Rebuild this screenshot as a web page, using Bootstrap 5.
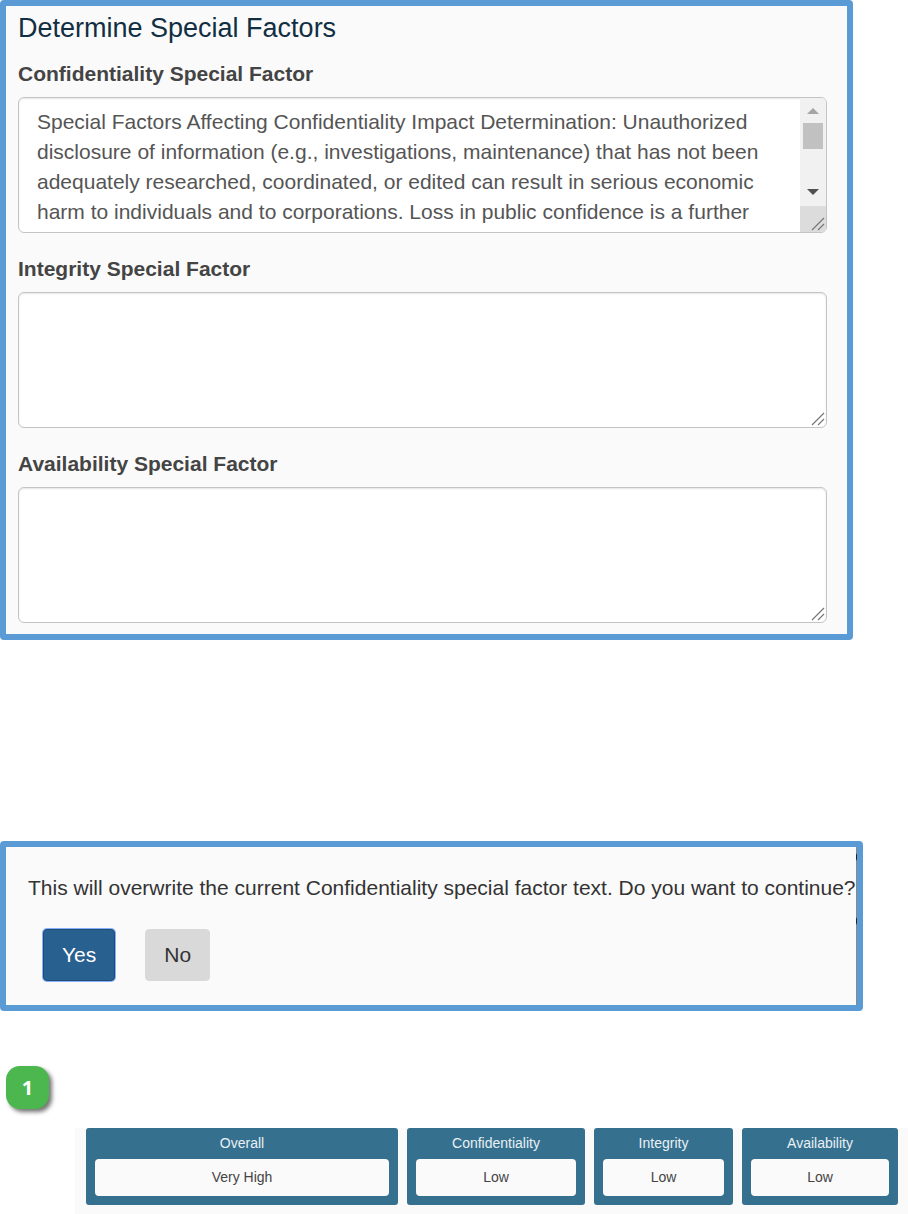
<!DOCTYPE html>
<html lang="en">
<head>
<meta charset="utf-8">
<meta name="viewport" content="width=device-width, initial-scale=1">
<title>Determine Special Factors</title>
<link href="https://cdn.jsdelivr.net/npm/bootstrap@5.3.0/dist/css/bootstrap.min.css" rel="stylesheet">
<style>
  body { font-family: "Liberation Sans", Arial, sans-serif; font-size: 21px; line-height: 30px; color: #333; background: #fff; }
  .panel { background: #fafafa; border: 6px solid #5b9bd5; border-radius: 4px; }
  .factors { margin-right: 55px; padding: 6px 20px 11px 12px; }
  .factors h1 { font-size: 27px; line-height: 32px; color: #112e42; margin-bottom: 15px; }
  .factors label { font-weight: 700; line-height: 30px; color: #444; margin-bottom: 8px; }
  .factor-box { position: relative; }
  .factor-box + label { margin-top: 21px; }
  .factor-box textarea { height: 136px; padding: 9px 36px 0 18px; font-size: 21px; line-height: 30px; color: #555; background: #fff; border: 1px solid #c4c4c4; border-radius: 6px; box-shadow: inset 0 1px 2px #0000001a; resize: none; overflow: hidden; }
  .scroller { position: absolute; top: 1px; right: 1px; bottom: 1px; width: 26px; height: 134px; border-radius: 0 5px 5px 0; pointer-events: none; }
  .grip { position: absolute; right: 2px; bottom: 2px; pointer-events: none; }
  .confirm { margin: 201px 45px 0 0; padding: 26px 0 24px 22px; background: linear-gradient(#888 6px, #222 8px, #222 12px, #888 14px, #888 70px, #222 72px, #222 76px, #888 78px) right / 1px 100% no-repeat #fafafa; }
  .confirm p { white-space: nowrap; margin-bottom: 26px; }
  .confirm .btn { height: 52px; padding: 0 18px; font-size: 21px; border: 1px solid #d9d9d9; border-radius: 4px; background: #d9d9d9; color: #333; }
  .confirm .btn-yes { background: #286090; border: 1px solid #204d74; color: #fff; box-shadow: 0 0 0 1px #86b0ff; }
  .answers { gap: 30px; margin-left: 15px; }
  .step { width: 43px; height: 43px; margin: 55px 0 0 6px; border-radius: 14px; background: #4bb74e; color: #fff; font-family: "Open Sans", sans-serif; font-weight: 700; font-size: 20px; box-shadow: 3px 3px 4px #0000008c; }
  .ratings { display: grid; grid-template-columns: 312fr 178fr 139fr 156fr; gap: 9px; margin: 19px 0 0 75px; padding: 0 10px 9px 11px; background: #fafafa; font-size: 14px; text-align: center; }
  .rating { background: #36708f; color: #e9f1f5; border-radius: 3px; padding: 0 9px 9px; }
  .rating dt { font-weight: 400; line-height: 31px; }
  .rating dd { margin: 0; background: #fafafa; color: #444; border-radius: 4px; line-height: 37px; }
</style>
</head>
<body>
<main>
  <form class="panel factors">
    <h1 class="fw-normal">Determine Special Factors</h1>
    <label class="d-block" for="conf">Confidentiality Special Factor</label>
    <div class="factor-box">
      <textarea class="form-control" id="conf">Special Factors Affecting Confidentiality Impact Determination: Unauthorized disclosure of information (e.g., investigations, maintenance) that has not been adequately researched, coordinated, or edited can result in serious economic harm to individuals and to corporations. Loss in public confidence is a further</textarea>
      <svg class="scroller" viewBox="0 0 26 134" aria-hidden="true">
        <path fill="#f1f1f1" d="M0 0h26v108H0z"/><path fill="#dcdcdc" d="M0 108h26v26H0z"/>
        <path fill="#c1c1c1" d="M3 25h20v26H3z"/><path fill="#a5a5a5" d="M7 16l6-6 6 6z"/><path fill="#505050" d="M7 91h12l-6 6z"/>
        <path stroke="#777" stroke-width="1.2" d="M12 132l12-12M18 132l6-6"/>
      </svg>
    </div>
    <label class="d-block" for="integ">Integrity Special Factor</label>
    <div class="factor-box">
      <textarea class="form-control" id="integ"></textarea>
      <svg class="grip" width="14" height="14" aria-hidden="true"><path stroke="#777" stroke-width="1.2" d="M1 13L13 1M7 13l6-6"/></svg>
    </div>
    <label class="d-block" for="avail">Availability Special Factor</label>
    <div class="factor-box">
      <textarea class="form-control" id="avail"></textarea>
      <svg class="grip" width="14" height="14" aria-hidden="true"><path stroke="#777" stroke-width="1.2" d="M1 13L13 1M7 13l6-6"/></svg>
    </div>
  </form>

  <section class="panel confirm">
    <p>This will overwrite the current Confidentiality special factor text. Do you want to continue?</p>
    <div class="answers d-flex">
      <button type="button" class="btn btn-yes">Yes</button>
      <button type="button" class="btn">No</button>
    </div>
  </section>

  <div class="step d-flex align-items-center justify-content-center">1</div>

  <section class="ratings">
    <dl class="rating mb-0"><dt>Overall</dt><dd>Very High</dd></dl>
    <dl class="rating mb-0"><dt>Confidentiality</dt><dd>Low</dd></dl>
    <dl class="rating mb-0"><dt>Integrity</dt><dd>Low</dd></dl>
    <dl class="rating mb-0"><dt>Availability</dt><dd>Low</dd></dl>
  </section>
</main>
<script src="https://cdn.jsdelivr.net/npm/bootstrap@5.3.0/dist/js/bootstrap.bundle.min.js"></script>
</body>
</html>
